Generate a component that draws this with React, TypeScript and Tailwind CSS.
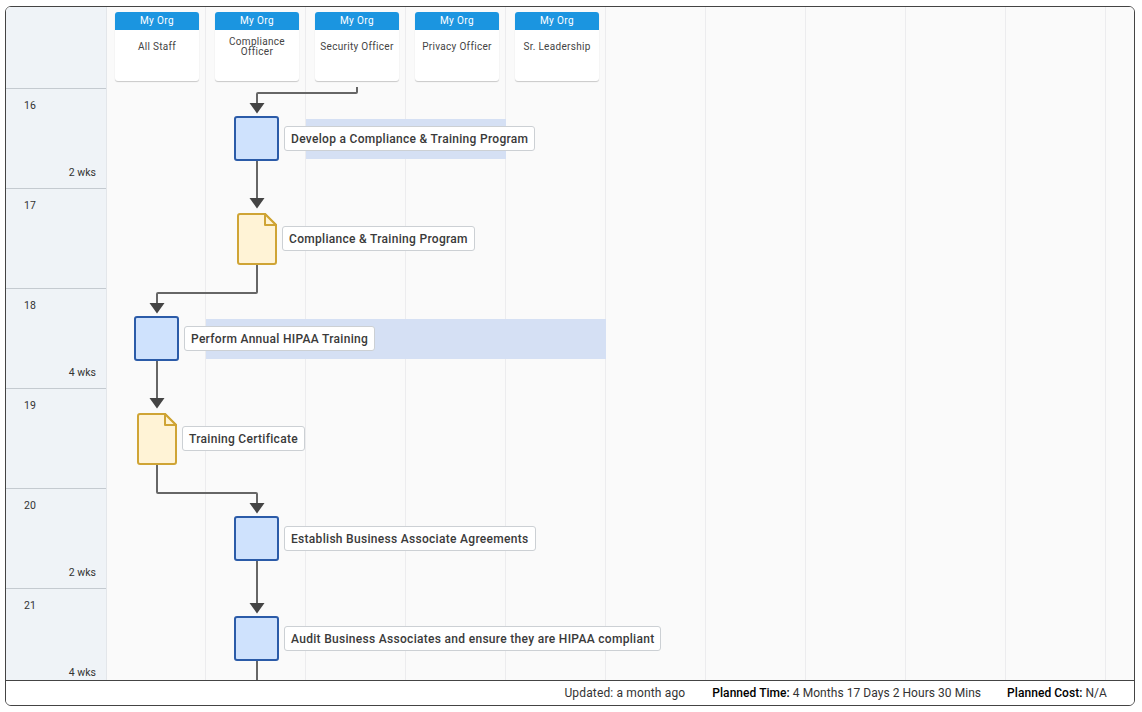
const lanes = ["All Staff", "Compliance Officer", "Security Officer", "Privacy Officer", "Sr. Leadership", "", "", "", "", "", "", ""];

const rows = [
  { step: 16, time: "2 wks" },
  { step: 17, time: "" },
  { step: 18, time: "4 wks" },
  { step: 19, time: "" },
  { step: 20, time: "2 wks" },
  { step: 21, time: "4 wks" },
];

// canvas origin is the top-left of the lanes area, all node coords are relative to it
const tasks = [
  { left: 128, top: 109, label: "Develop a Compliance & Training Program", labelLeft: 178, labelTop: 119 },
  { left: 28, top: 309, label: "Perform Annual HIPAA Training", labelLeft: 78, labelTop: 319 },
  { left: 128, top: 509, label: "Establish Business Associate Agreements", labelLeft: 178, labelTop: 519 },
  { left: 128, top: 609, label: "Audit Business Associates and ensure they are HIPAA compliant", labelLeft: 178, labelTop: 619 },
];

const docs = [
  { left: 131, top: 206, label: "Compliance & Training Program", labelLeft: 176, labelTop: 219 },
  { left: 31, top: 406, label: "Training Certificate", labelLeft: 76, labelTop: 419 },
];

const bars = [
  { left: 200, top: 112, width: 200 },
  { left: 100, top: 312, width: 400 },
];

const lines = [
  "M251 80 V85 Q251 86 250 86 H152 Q151 86 151 87 V97",
  "M151 154 V192",
  "M151 257 V285 Q151 286 150 286 H52 Q51 286 51 287 V297",
  "M51 354 V392",
  "M51 457 V485 Q51 486 52 486 H150 Q151 486 151 487 V497",
  "M151 554 V597",
  "M151 654 V680",
];

const arrows = [
  [151, 96],
  [151, 191],
  [51, 296],
  [51, 391],
  [151, 496],
  [151, 596],
];

function Label({ text, left, top }: { text: string; left: number; top: number }) {
  return (
    <div
      className="absolute h-[25px] flex items-center px-[6px] pt-[1px] bg-white border border-[#ccd0d4] rounded-[3px] text-[12px] font-medium tracking-[0.3px] text-[#3a3a3a] whitespace-nowrap"
      style={{ left, top }}
    >
      {text}
    </div>
  );
}

export default function App() {
  return (
    <div className="w-[1142px] h-[712px] bg-white pt-[6px] pl-[5px] font-['Roboto',sans-serif]">
      <div className="w-[1130px] h-[700px] border border-[#444] rounded-[6px] overflow-hidden flex flex-col">
        <div className="flex flex-1 min-h-0 bg-[#fafafa]">
          <div className="w-[101px] shrink-0 bg-[#eff3f7] border-r border-[#e3e6ea] overflow-hidden">
            <div className="h-[81px]" />
            {rows.map((row) => (
              <div key={row.step} className="h-[100px] border-t border-[#c4cad0] flex flex-col justify-between pl-[18px] pr-[10px] pt-[9px] pb-[7px] text-[10.5px] text-[#333]">
                <span>{row.step}</span>
                <span className="self-end">{row.time}</span>
              </div>
            ))}
          </div>

          <div className="relative flex-1 -ml-px overflow-hidden">
            <div className="flex h-full">
              {lanes.map((lane, i) => (
                <div key={i} className="w-[100px] shrink-0 h-full border-r border-[#ececee] pl-[9px] pr-[6px] pt-[5px]">
                  {lane && (
                    <div className="h-[69px] bg-white rounded-[3px] shadow-[0_1px_1px_rgba(0,0,0,0.2)] overflow-hidden">
                      <div className="h-[18px] pb-[1px] bg-[#1b95e0] text-white text-[10px] tracking-[0.4px] flex items-center justify-center">
                        My Org
                      </div>
                      <div className="h-[34px] flex items-center justify-center text-center text-[10px] leading-[10px] tracking-[0.3px] text-[#444]">
                        {lane}
                      </div>
                    </div>
                  )}
                </div>
              ))}
            </div>

            {bars.map((bar) => (
              <div key={bar.left} className="absolute h-[40px] bg-[#d5e0f4]" style={{ left: bar.left, top: bar.top, width: bar.width }} />
            ))}

            <svg className="absolute left-0 top-0" width="1028" height="680" fill="none">
              {lines.map((d) => (
                <path key={d} d={d} stroke="#666" strokeWidth="2" />
              ))}
              {arrows.map(([x, y]) => (
                <polygon key={`${x}-${y}`} points={`${x - 7.5},${y} ${x + 7.5},${y} ${x},${y + 10.5}`} fill="#444" />
              ))}
            </svg>

            {tasks.map((task) => (
              <div key={task.label}>
                <div className="absolute w-[45px] h-[45px] bg-[#cfe2fd] border-2 border-[#2b5ba8] rounded-[3px]" style={{ left: task.left, top: task.top }} />
                <Label text={task.label} left={task.labelLeft} top={task.labelTop} />
              </div>
            ))}

            {docs.map((doc) => (
              <div key={doc.label}>
                <svg className="absolute" style={{ left: doc.left, top: doc.top }} width="40" height="52" fill="none">
                  <path d="M3 1 H28 L39 12 V49 Q39 51 37 51 H3 Q1 51 1 49 V3 Q1 1 3 1 Z" fill="#fff3d6" stroke="#cfa435" strokeWidth="2" />
                  <path d="M28 1 V12 H39 Z" fill="#fff3d6" stroke="#cfa435" strokeWidth="2" strokeLinejoin="round" />
                </svg>
                <Label text={doc.label} left={doc.labelLeft} top={doc.labelTop} />
              </div>
            ))}
          </div>
        </div>

        <div className="h-[25px] shrink-0 border-t border-[#444] bg-white flex items-center justify-end gap-[26px] pr-[27px] text-[12px] tracking-[0.05px] text-[#333]">
          <span className="tracking-[0.15px] mr-[1px]">Updated: a month ago</span>
          <span><b className="font-medium text-black">Planned Time:</b> 4 Months 17 Days 2 Hours 30 Mins</span>
          <span><b className="font-medium text-black">Planned Cost:</b> N/A</span>
        </div>
      </div>
    </div>
  );
}
